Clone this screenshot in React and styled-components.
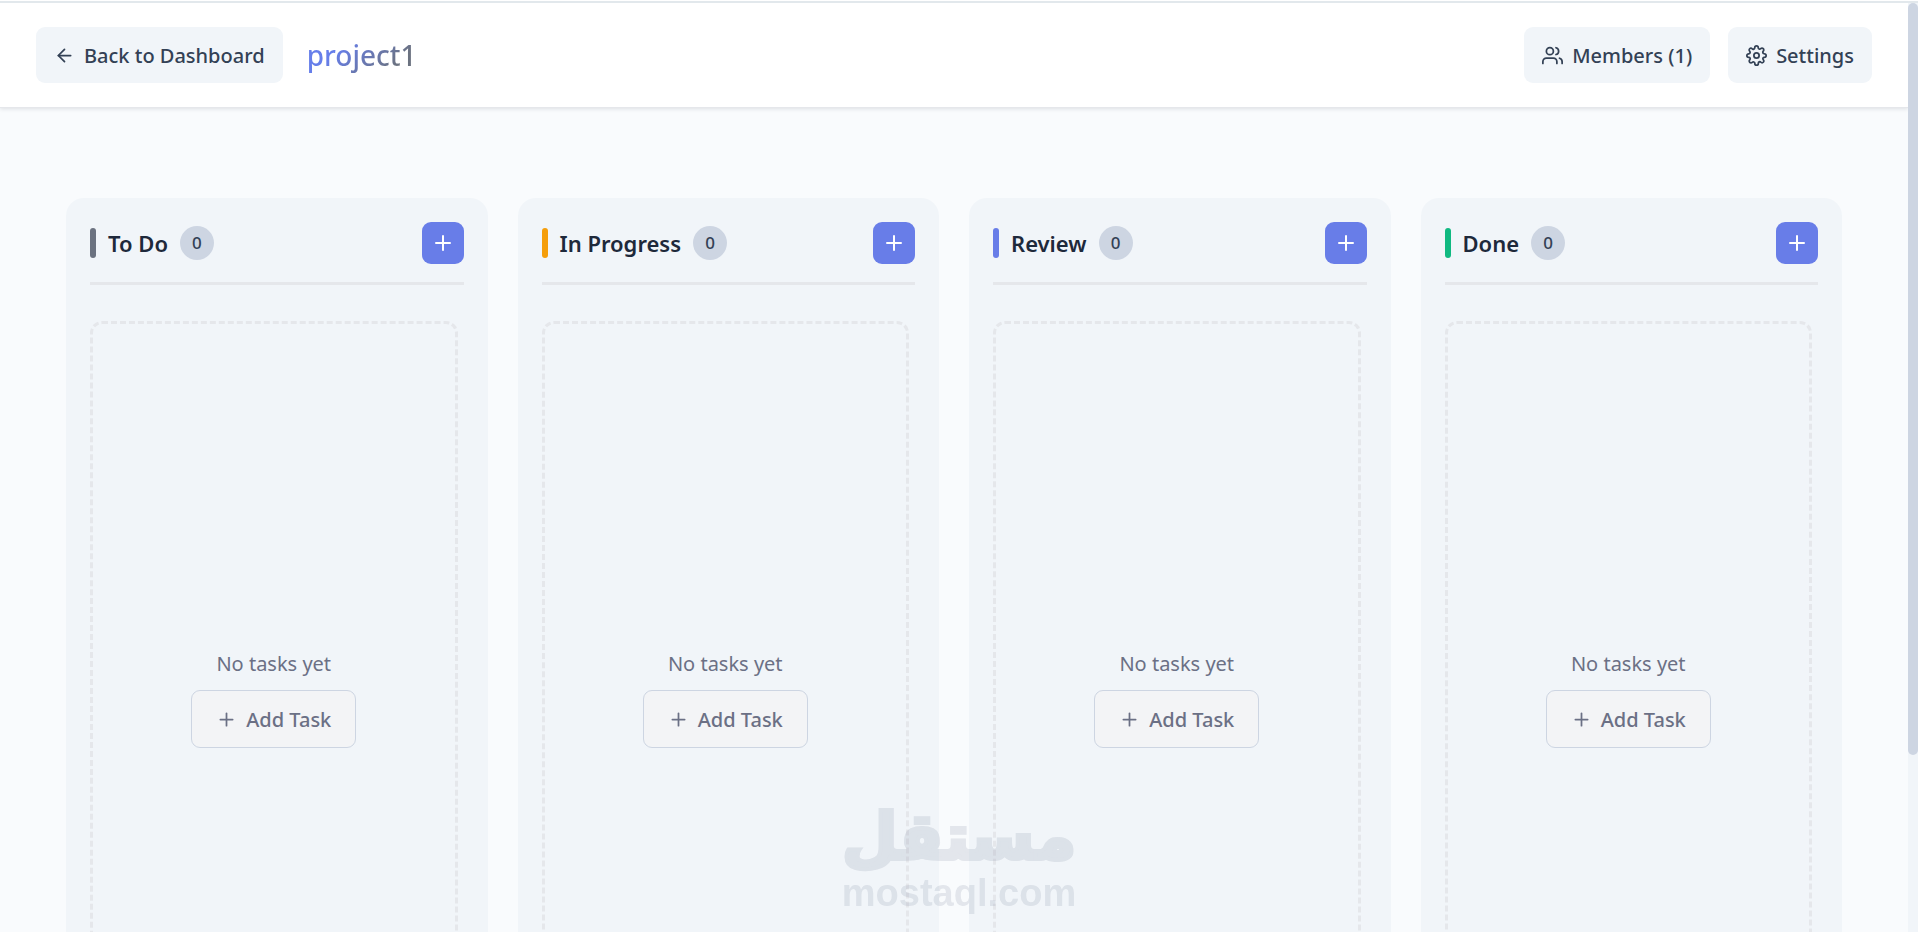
import React from 'react';
import styled, { createGlobalStyle } from 'styled-components';
import { FiArrowLeft, FiPlus, FiSettings, FiUsers } from 'react-icons/fi';

const GlobalStyle = createGlobalStyle`
  * {
    box-sizing: border-box;
  }

  body {
    margin: 0;
    background: #fff;
    color: #1e293b;
    font-family: 'Segoe UI', 'Noto Sans', 'Open Sans', sans-serif;
    font-size: 20px;
  }

  button {
    font: inherit;
    cursor: pointer;
  }
`;

const StyledShell = styled.div`
  display: grid;
  grid-template-rows: auto minmax(0, 1fr);
  grid-template-columns: minmax(0, 1fr) 10px;
  height: 100vh;
  padding-top: 1px;
`;

const StyledTopEdge = styled.div`
  grid-column: 1 / -1;
  height: 2px;
  background: #e2e8ec;
`;

const StyledPage = styled.div`
  overflow-y: auto;
  background: #f9fbfd;
  scrollbar-width: none;
`;

const StyledScrollTrack = styled.div`
  background: #f1f5f9;
`;

const StyledScrollThumb = styled.div`
  height: 81%;
  border-radius: 5px;
  background: #cdd5e2;
`;

const StyledHeader = styled.header`
  display: flex;
  align-items: center;
  justify-content: space-between;
  padding: 24px 36px;
  background: #fff;
  border-bottom: 1px solid #e5e7eb;
  box-shadow: 0 1px 4px rgba(15, 23, 42, 0.12);
`;

const StyledGroup = styled.div`
  display: flex;
  align-items: center;
  gap: ${props => props.$gap};
`;

const StyledHeaderButton = styled.button`
  display: flex;
  align-items: center;
  gap: 9px;
  height: 56px;
  padding: 0 18px;
  border: 0;
  border-radius: 9px;
  background: #f1f5f9;
  color: #334155;
  font-weight: 500;
`;

const StyledProjectName = styled.h1`
  margin: 0;
  background: linear-gradient(135deg, #667eea 30%, #6b7280 80%);
  background-clip: text;
  color: transparent;
  font-size: 28px;
  font-weight: 500;
`;

const StyledBoard = styled.main`
  display: grid;
  grid-template-columns: repeat(4, minmax(0, 1fr));
  gap: 30px;
  padding: 90px 66px 48px;
`;

const StyledColumn = styled.section`
  padding: 24px;
  border-radius: 18px;
  background: #f1f5f9;
`;

const StyledColumnHeader = styled.div`
  display: flex;
  align-items: center;
  justify-content: space-between;
  padding-bottom: 18px;
  border-bottom: 3px solid #e5e7eb;
`;

const StyledMarker = styled.span`
  width: 6px;
  height: 30px;
  border-radius: 3px;
  background: ${props => props.$color};
`;

const StyledColumnTitle = styled.h2`
  margin: 0;
  font-size: 22px;
  font-weight: 600;
  line-height: 30px;
`;

const StyledCount = styled.span`
  min-width: 34px;
  border-radius: 17px;
  background: #cdd5e2;
  color: #334155;
  font-size: 17px;
  font-weight: 500;
  line-height: 34px;
  text-align: center;
`;

const StyledAddButton = styled.button`
  display: grid;
  place-items: center;
  width: 42px;
  height: 42px;
  padding: 0;
  border: 0;
  border-radius: 9px;
  background: #687de8;
  color: #fff;
`;

const StyledEmpty = styled.div`
  display: flex;
  flex-direction: column;
  align-items: center;
  justify-content: center;
  gap: 12px;
  min-height: 756px;
  margin: 36px 6px 0 0;
  border: 3px dashed #e5e7eb;
  border-radius: 12px;
  color: #6b7085;

  p {
    margin: 0;
    line-height: 28px;
  }
`;

const StyledTaskButton = styled.button`
  display: flex;
  align-items: center;
  gap: 9px;
  height: 58px;
  padding: 0 24px;
  border: 1px solid #cdd5e2;
  border-radius: 9px;
  background: #f3f4f6;
  color: #6b7085;
  font-weight: 500;
`;

const StyledWatermark = styled.div`
  position: fixed;
  bottom: 18px;
  left: 50%;
  display: flex;
  flex-direction: column;
  align-items: center;
  color: #8a94a8;
  font-family: 'Liberation Sans', Arial, sans-serif;
  font-size: 38px;
  font-weight: 700;
  line-height: 42px;
  opacity: 0.2;
  pointer-events: none;
  transform: translateX(-50%);
`;

const StyledArabicName = styled.span`
  font-family: 'DejaVu Sans', sans-serif;
  font-size: 64px;
  line-height: 70px;
  -webkit-text-stroke: 4px currentColor;
`;

const columns = [
  { title: 'To Do', color: '#6b7280', tasks: [] },
  { title: 'In Progress', color: '#f59e0b', tasks: [] },
  { title: 'Review', color: '#687de8', tasks: [] },
  { title: 'Done', color: '#10b981', tasks: [] },
];

const Column = ({ title, color, tasks }) => (
  <StyledColumn>
    <StyledColumnHeader>
      <StyledGroup $gap="12px">
        <StyledMarker $color={color} />
        <StyledColumnTitle>{title}</StyledColumnTitle>
        <StyledCount>{tasks.length}</StyledCount>
      </StyledGroup>
      <StyledAddButton type="button" aria-label={`Add task to ${title}`}>
        <FiPlus size={24} />
      </StyledAddButton>
    </StyledColumnHeader>
    <StyledEmpty>
      <p>No tasks yet</p>
      <StyledTaskButton type="button">
        <FiPlus size={21} />
        Add Task
      </StyledTaskButton>
    </StyledEmpty>
  </StyledColumn>
);

const App = () => (
  <StyledShell>
    <GlobalStyle />
    <StyledTopEdge />
    <StyledPage>
      <StyledHeader>
        <StyledGroup $gap="24px">
          <StyledHeaderButton type="button">
            <FiArrowLeft size={21} />
            Back to Dashboard
          </StyledHeaderButton>
          <StyledProjectName>project1</StyledProjectName>
        </StyledGroup>
        <StyledGroup $gap="18px">
          <StyledHeaderButton type="button">
            <FiUsers size={21} />
            Members (1)
          </StyledHeaderButton>
          <StyledHeaderButton type="button">
            <FiSettings size={21} />
            Settings
          </StyledHeaderButton>
        </StyledGroup>
      </StyledHeader>
      <StyledBoard>
        {columns.map(column => (
          <Column key={column.title} {...column} />
        ))}
      </StyledBoard>
    </StyledPage>
    <StyledScrollTrack>
      <StyledScrollThumb />
    </StyledScrollTrack>
    <StyledWatermark>
      <StyledArabicName lang="ar" dir="rtl">
        مستقل
      </StyledArabicName>
      <span>mostaql.com</span>
    </StyledWatermark>
  </StyledShell>
);

export default App;
